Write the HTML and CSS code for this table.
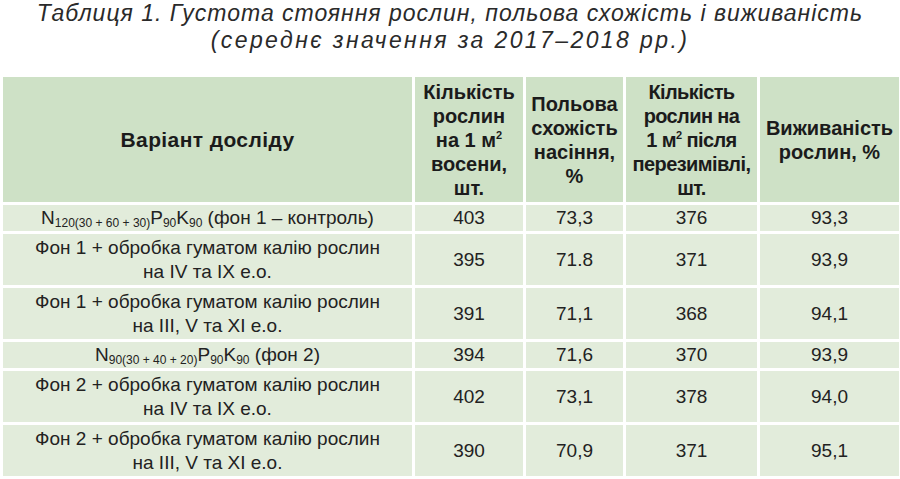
FILE: index.html
```html
<!DOCTYPE html>
<html lang="uk">
<head>
<meta charset="utf-8">
<link rel="stylesheet" href="styles.css">
</head>
<body>
<div class="caption">
  <div class="cap-line">Таблиця 1. Густота стояння рослин, польова схожість і виживаність</div>
  <div class="cap-line cap-sub">(середнє значення за 2017–2018 рр.)</div>
</div>
<table class="tbl">
  <colgroup>
    <col class="c1"><col class="c2"><col class="c3"><col class="c4"><col class="c5">
  </colgroup>
  <thead>
    <tr class="head">
      <th class="wide">Варіант досліду</th>
      <th>Кількість<br>рослин<br>на 1 м<sup>2</sup><br>восени,<br>шт.</th>
      <th>Польова<br>схожість<br>насіння,<br>%</th>
      <th class="narrow">Кількість<br>рослин на<br>1 м<sup>2</sup> після<br>перезимівлі,<br>шт.</th>
      <th>Виживаність<br>рослин, %</th>
    </tr>
  </thead>
  <tbody>
    <tr class="short">
      <td>N<sub>120(30 + 60 + 30)</sub>P<sub>90</sub>K<sub>90</sub> (фон 1 – контроль)</td>
      <td>403</td><td>73,3</td><td>376</td><td>93,3</td>
    </tr>
    <tr class="tall">
      <td>Фон 1 + обробка гуматом калію рослин<br>на IV та IX е.о.</td>
      <td>395</td><td>71.8</td><td>371</td><td>93,9</td>
    </tr>
    <tr class="tall">
      <td>Фон 1 + обробка гуматом калію рослин<br>на III, V та XI е.о.</td>
      <td>391</td><td>71,1</td><td>368</td><td>94,1</td>
    </tr>
    <tr class="short">
      <td>N<sub>90(30 + 40 + 20)</sub>P<sub>90</sub>K<sub>90</sub> (фон 2)</td>
      <td>394</td><td>71,6</td><td>370</td><td>93,9</td>
    </tr>
    <tr class="tall">
      <td>Фон 2 + обробка гуматом калію рослин<br>на IV та IX е.о.</td>
      <td>402</td><td>73,1</td><td>378</td><td>94,0</td>
    </tr>
    <tr class="tall">
      <td>Фон 2 + обробка гуматом калію рослин<br>на III, V та XI е.о.</td>
      <td>390</td><td>70,9</td><td>371</td><td>95,1</td>
    </tr>
  </tbody>
</table>
</body>
</html>
```
FILE: styles.css
```css
html, body {
  margin: 0;
  padding: 0;
  background: #ffffff;
}
body {
  width: 900px;
  height: 479px;
  overflow: hidden;
  font-family: "Liberation Sans", Arial, sans-serif;
  color: #1e1e1e;
}
.caption {
  text-align: center;
  font-style: italic;
  font-size: 23px;
  line-height: 27px;
  letter-spacing: 1px;
  color: #2a2a2a;
  height: 74px;
}
.cap-sub {
  letter-spacing: 2.4px;
}
.tbl {
  border-collapse: collapse;
  table-layout: fixed;
  width: 899px;
}
.c1 { width: 412px; }
.c2 { width: 111px; }
.c3 { width: 100px; }
.c4 { width: 134px; }
.c5 { width: 142px; }
.tbl th, .tbl td {
  border: 3px solid #ffffff;
  text-align: center;
  vertical-align: middle;
  padding: 0 1px;
  white-space: nowrap;
}
.tbl th {
  background: #cee1c6;
  font-weight: bold;
  font-size: 20px;
  line-height: 24px;
  color: #1b1b1b;
}
.tbl th.wide {
  font-size: 21px;
  letter-spacing: 0.4px;
}
.tbl th.narrow {
  letter-spacing: -0.6px;
}
.tbl td {
  background: #e2ecdb;
  font-size: 19px;
  line-height: 24px;
  color: #222222;
}
.head { height: 128px; }
.short { height: 29px; }
.tall { height: 54px; }
sup {
  font-size: 11px;
  vertical-align: 8px;
  line-height: 1;
}
sub {
  font-size: 12px;
  vertical-align: -3px;
  line-height: 1;
}
```
